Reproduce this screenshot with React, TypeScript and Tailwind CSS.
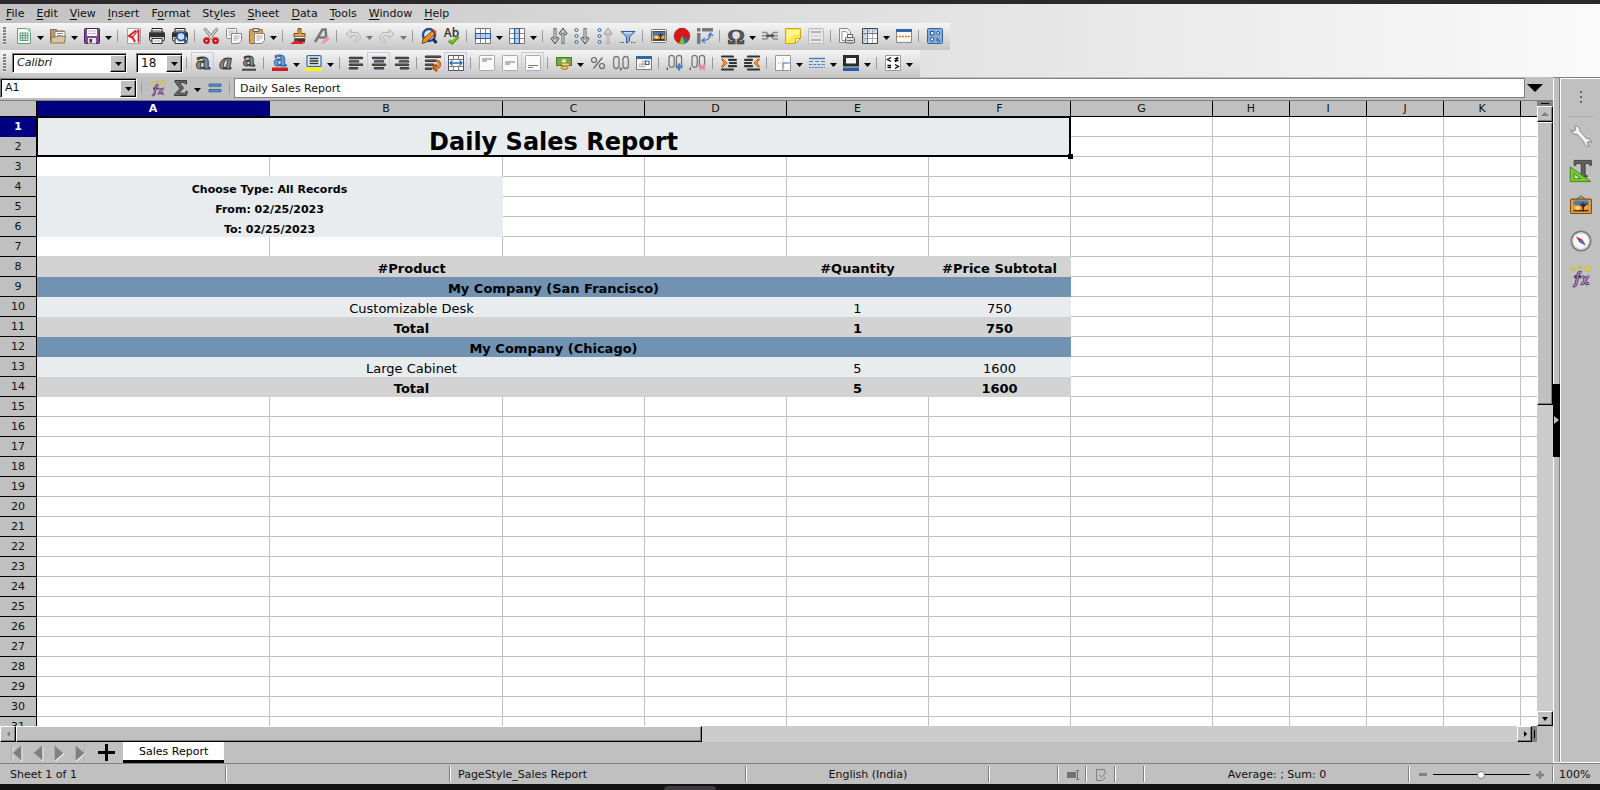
import type { ReactNode } from "react";

const BEVEL =
  "border border-t-white border-l-white border-r-black border-b-black bg-[#c0c0c0] shadow-[inset_-1px_-1px_0_#808080]";
const FIELD =
  "flex border border-t-[#808080] border-l-[#808080] border-r-white border-b-white bg-white shadow-[inset_1px_1px_0_#000]";

const MENUS = [
  ["", "F", "ile"],
  ["", "E", "dit"],
  ["", "V", "iew"],
  ["", "I", "nsert"],
  ["F", "o", "rmat"],
  ["St", "y", "les"],
  ["", "S", "heet"],
  ["", "D", "ata"],
  ["", "T", "ools"],
  ["", "W", "indow"],
  ["", "H", "elp"],
];

/* ---------- icons, all on a 16 unit grid ---------- */

function lines(rows: number[][]) {
  return rows.map(([x1, x2, y]) => (
    <g key={y} strokeLinecap="round">
      <path d={`M${x1} ${y}H${x2}`} stroke="#2e3132" strokeWidth="2.400" />
      <path d={`M${x1} ${y}H${x2}`} stroke="#777a78" strokeWidth=".6" />
    </g>
  ));
}

const fxGlyph = (
  <>
    <path
      d="M2.2 1.6l.5 1 1 .1-.8.7.2 1-.9-.5-.9.5.2-1-.8-.7 1-.1zM7 .2l.5 1 1 .1-.8.7.2 1L7 2.5l-.9.5.2-1-.8-.7 1-.1zM13 .2l.8 1.5 1.6.2-1.2 1.1.3 1.6-1.5-.8-1.5.8.3-1.6-1.2-1.1 1.6-.2z"
      fill="#f0cf28"
      stroke="#cda80d"
      strokeWidth=".4"
    />
    <path
      d="M2 15c2 .8 2.400-.8 2.800-2.800l1-5C6.100 5.600 7 4.800 8.500 5.400M3 8.500h5M8.500 9c1.500-.8 2 .4 2.500 2.200.5 2 1 3 3 2.200M14 8.800c-1.500-.5-2.300.7-3.200 2.500-.8 1.800-1.500 2.700-3 2.200"
      stroke="#5c3566"
      strokeWidth="2.200"
      fill="none"
    />
    <path
      d="M2 15c2 .8 2.400-.8 2.800-2.800l1-5C6.100 5.600 7 4.800 8.500 5.400M8.500 9c1.500-.8 2 .4 2.500 2.200.5 2 1 3 3 2.200M14 8.800c-1.500-.5-2.300.7-3.200 2.500-.8 1.800-1.500 2.700-3 2.200"
      stroke="#b48fbc"
      strokeWidth=".9"
      fill="none"
    />
  </>
);

const zeros = (
  <>
    <rect x="2" y=".3" width="5.200" height="12" rx="2.600" fill="none" stroke="#777" strokeWidth="1.300" />
    <rect x="9.400" y=".3" width="5.200" height="12" rx="2.600" fill="none" stroke="#777" strokeWidth="1.300" />
    <path d="M.3 12.500V15" stroke="#444" strokeWidth="1.200" />
  </>
);

function printer(extra?: ReactNode) {
  return (
    <>
      <path d="M3 .5h10v4H3z" fill="#f4f4f4" stroke="#222" />
      <path d="M4.500 2.500h7" stroke="#999" />
      <rect x=".5" y="4" width="15" height="9" rx="1.500" fill="#c9c9c4" stroke="#333" />
      <path d="M.5 4.500h15V9H.5z" fill="#2f3233" />
      <path d="M3 10.500h10v5H3z" fill="#fafafa" stroke="#333" />
      <path d="M5 13h6" stroke="#aaa" />
      {extra}
    </>
  );
}

function letterA(size: number, y: number, italic = false, color = "#8a8d8a", line = "#2e3132") {
  return (
    <text
      x="8"
      y={y}
      textAnchor="middle"
      fontSize={size}
      fontWeight="700"
      fontStyle={italic ? "italic" : "normal"}
      fontFamily="DejaVu Serif, serif"
      fill={color}
      stroke={line}
      strokeWidth=".9"
    >
      a
    </text>
  );
}

function valign(y: number) {
  return (
    <>
      <rect x=".5" y=".5" width="15" height="15" rx=".8" fill="#fafafa" stroke="#aaa" />
      <path d={`M3 ${y}h10M3 ${y + 2}h5`} stroke="#777" />
    </>
  );
}

function tableGrid(band: string) {
  return (
    <>
      <path d="M.5.500h15v15H.5z" fill="#fff" stroke="#777" />
      <path d={band} fill="#b7d0ee" />
      <path d="M.5 5.500h15M.5 10.500h15M5.500.5v15M10.500.5v15" stroke="#888" />
      <path d={band} fill="none" stroke="#2a5ca5" strokeWidth="1.200" />
    </>
  );
}

const picture = (
  <>
    <rect x="2.500" y="4" width="11" height="8" fill="#4e78ad" />
    <path d="M2.500 7.500h11V12h-11z" fill="#f3a33c" />
    <path d="M2.500 10.800h11V12h-11z" fill="#5a3a12" />
    <circle cx="5.500" cy="9.500" r="1.400" fill="#ffe37a" />
    <path d="M9.500 12V8.500M9.500 9L7.500 6.500M9.500 9L12 6M9.500 8V5.500" stroke="#2b2110" strokeWidth="1" />
  </>
);

const ICONS: Record<string, ReactNode> = {
  newDoc: (
    <>
      <path d="M1.500.5h9l4 4v11h-13z" fill="#f6faf8" stroke="#5f9c80" />
      <path d="M10 0h5v5" fill="#a9d3c0" />
      <path d="M4 5h8v7.500H4zM4 7.500h8M4 10h8M6.700 5v7.500M9.300 5v7.500" fill="none" stroke="#5f9c80" />
    </>
  ),
  folder: (
    <>
      <path d="M.5 14V1.500h6L7.500 3H14.500v11z" fill="#b39a77" stroke="#836a47" />
      <path d="M5 3.500h10v6H5z" fill="#fff" stroke="#888" />
      <path d="M7 5.500h6M7 7.500h4" stroke="#888" />
      <path d="M.5 15l1.500-6h5l1-1h7.500l-1 7z" fill="#d8c3a2" stroke="#937a55" />
    </>
  ),
  save: (
    <>
      <rect x=".5" y=".5" width="15" height="15" rx="1" fill="#7d4a92" stroke="#4b2260" />
      <path d="M3 1h10v7H3z" fill="#fafafa" />
      <path d="M4 3h8M4 5.500h8" stroke="#bbb" />
      <path d="M4 10h8v5.500H4z" fill="#e4e4e4" />
      <path d="M5.500 11H8v3.500H5.500z" fill="#4b2260" />
    </>
  ),
  pdf: (
    <>
      <path d="M1.500.5h13v15h-13z" fill="#f5f5f5" stroke="#a3a3a3" />
      <path d="M10 2.500L3 8l3.500 1.500L9 14" stroke="#d8212c" strokeWidth="2" fill="none" />
      <path d="M12.500 1.500v13" stroke="#d8212c" strokeWidth="1.800" />
      <path d="M6.500 9.500L12 2" stroke="#d8212c" strokeWidth="1.200" />
    </>
  ),
  print: printer(),
  preview: printer(
    <>
      <circle cx="9" cy="8.500" r="4" fill="#cfe1f5" stroke="#24569b" strokeWidth="1.600" />
      <path d="M12 11.500l3 3.500" stroke="#24569b" strokeWidth="2.400" />
    </>,
  ),
  cut: (
    <>
      <path d="M1.500.5l9 11M14.500.5l-9 11" stroke="#7c7f7d" strokeWidth="2.800" />
      <path d="M2 1l8 10M14 1L6 11" stroke="#ececec" strokeWidth="1.200" />
      <circle cx="3.500" cy="12.700" r="2.200" fill="none" stroke="#d01818" strokeWidth="2.400" />
      <circle cx="12.500" cy="12.700" r="2.200" fill="none" stroke="#d01818" strokeWidth="2.400" />
    </>
  ),
  copy: (
    <>
      <rect x=".5" y=".5" width="10" height="10" rx="1" fill="#fafafa" stroke="#888" />
      <path d="M2.500 3h6M2.500 5h6M2.500 7h3" stroke="#aaa" />
      <path d="M5.500 5.500h10v7l-3 3h-7z" fill="#fafafa" stroke="#888" />
      <path d="M7.500 8h6M7.500 10h6M7.500 12h4" stroke="#aaa" />
    </>
  ),
  paste: (
    <>
      <rect x=".5" y="1.500" width="13" height="14" rx="1" fill="#d9a44c" stroke="#8f6216" />
      <path d="M4 .5h6v3H4z" fill="#d5d5d5" stroke="#666" />
      <path d="M5.500 5.500h10v7l-3 3h-7z" fill="#fafafa" stroke="#888" />
      <path d="M7.500 8h6M7.500 10h6M7.500 12h3" stroke="#aaa" />
    </>
  ),
  brush: (
    <>
      <path d="M7 .5h3v5h4v3H3v-3h4z" fill="#e2a24b" stroke="#7d4d0e" />
      <path d="M3.500 8.500h10.500v2H3.500z" fill="#eee" stroke="#666" strokeWidth=".7" />
      <path d="M3.500 10.500h10.500v4H3z" fill="#453424" />
      <path d="M0 15l6-3 2 2 4-1v3H0z" fill="#e0232e" />
    </>
  ),
  clear: (
    <>
      <path d="M1 14L8.500 1.500h3l1 11M4.500 9.500H12" stroke="#777a78" strokeWidth="2.600" fill="none" />
      <path d="M7 15l6.500-7 2.500 2.500L9.500 16z" fill="#f19aa5" />
    </>
  ),
  undo: (
    <path d="M6 1.500L1 6l5 4.500V7.700h4.500c2.500 0 2.500 3.500-.5 4v2.500c7-.5 7-9.200.5-9.700H6z" fill="#ddd" stroke="#b4b4b4" />
  ),
  redo: (
    <path d="M10 1.500L15 6l-5 4.500V7.700H5.500c-2.500 0-2.500 3.500.5 4v2.500c-7-.5-7-9.200-.5-9.700H10z" fill="#ddd" stroke="#b4b4b4" />
  ),
  find: (
    <>
      <circle cx="8" cy="7" r="6" fill="#dce9f7" stroke="#234d8e" strokeWidth="2.400" />
      <path d="M12 11l3.500 4" stroke="#1d2d4a" strokeWidth="3" />
      <path d="M1 15.500l1-4.500 9-8 3 3-8.500 8z" fill="#f08c2a" stroke="#5a3008" strokeWidth=".8" />
      <path d="M11.500 2.500l1.500-1.300 2.700 2.700-1.500 1.500z" fill="#e33" />
    </>
  ),
  spell: (
    <>
      <text x="7.500" y="9" textAnchor="middle" fontSize="12" fontFamily="Open Sans, sans-serif" fontWeight="600" fill="#333">
        Ab
      </text>
      <path d="M5 12.500l3 2.500 6.500-6.500" stroke="#4e9a06" strokeWidth="3" fill="none" />
      <path d="M5.500 12.500L8 14.500l6-6" stroke="#a8e45c" strokeWidth="1" fill="none" />
    </>
  ),
  rows: tableGrid("M.5 5.500h15v5H.5z"),
  cols: tableGrid("M5.500.5h5v15h-5z"),
  sort: (
    <>
      <path d="M4 0v13M.5 9.500L4 14l3.500-4.500M12 16V3M8.500 6.500L12 2l3.500 4.500" stroke="#5f6361" strokeWidth="3" fill="none" />
      <path d="M4 .8v12.500M1 10l3 4 3-4M12 15.200V2.800M9 6l3-4 3 4" stroke="#f4f4f4" fill="none" />
    </>
  ),
  asc: (
    <>
      <path d="M11 0v13M7.500 9.500L11 14l3.500-4.500" stroke="#5f6361" strokeWidth="3" fill="none" />
      <path d="M11 .8v12.500M8 10l3 4 3-4" stroke="#f4f4f4" fill="none" />
      {[2, 8, 14].map((y) => (
        <circle key={y} cx="2.500" cy={y} r="1.500" fill="#dfeaf6" stroke="#3465a4" />
      ))}
    </>
  ),
  desc: (
    <>
      <path d="M11 16V3M7.500 6.500L11 2l3.500 4.500" stroke="#8f928f" strokeWidth="2.800" fill="none" />
      <path d="M11 15.200V2.800M8 6l3-4 3 4" stroke="#fff" fill="none" />
      {[2, 8, 14].map((y) => (
        <circle key={y} cx="2.500" cy={y} r="1.500" fill="#dfeaf6" stroke="#3465a4" />
      ))}
    </>
  ),
  filter: (
    <>
      <path d="M1 3.500h14L9.500 9v4l-3 2V9z" fill="#8fb4de" stroke="#2a5ca5" />
      <path d="M4 4.800h8" stroke="#e3eefa" />
      <path d="M0 14.500h5M11 14.500h5" stroke="#2a5ca5" strokeDasharray="1.500 1" />
    </>
  ),
  image: (
    <>
      <rect x=".5" y="1.500" width="15" height="13" rx="1" fill="#fff" stroke="#777" />
      <path d="M1.500 3h13v10h-13z" fill="#4a4a4a" />
      {picture}
    </>
  ),
  chart: (
    <>
      <circle cx="8" cy="8" r="7.900" fill="#d8151b" stroke="#930d10" strokeWidth=".5" />
      <path d="M8 8v7.900A7.900 7.900 0 0 0 15 11.700z" fill="#3465a4" />
      <path d="M8 8l3 7.300A7.900 7.900 0 0 1 5 15.300z" fill="#73c91e" />
    </>
  ),
  pivot: (
    <>
      <path d="M0 0h3.500v3.500H0zM5 0h11v3.500H5zM0 5h3.500v11H0z" fill="#777a78" />
      <path d="M5.500 12.500c5 0 8-2 8-7M11 8l2.500-3L16 8M8 10l-3 2.500L8 15" stroke="#4a86c6" strokeWidth="1.400" fill="none" />
    </>
  ),
  omega: (
    <text
      x="8"
      y="15.500"
      textAnchor="middle"
      fontSize="22"
      fontWeight="700"
      fontFamily="Liberation Serif, serif"
      fill="#555857"
      stroke="#333"
      strokeWidth=".6"
    >
      Ω
    </text>
  ),
  link: (
    <>
      <path d="M0 4.500h4.500l2 2.500M0 11h4.500l2-2.500M16 4.500h-4.500l-2 2.500M16 11h-4.500l-2-2.500M0 7.700h5M11 7.700h5" stroke="#888b89" strokeWidth="1.600" fill="none" />
      <path d="M4 7.700h8" stroke="#444" strokeWidth="2" />
    </>
  ),
  note: (
    <>
      <path d="M.5.500h15v10l-5 5H.5z" fill="#fbe94f" stroke="#c9a90c" />
      <path d="M15.500 10.500h-5v5z" fill="#fff" stroke="#c9a90c" />
      <path d="M2 2h12v4C8 6 5 9 2 13z" fill="#fdf59a" />
    </>
  ),
  header: (
    <>
      <rect x=".5" y=".5" width="15" height="15" rx="1" fill="#e6e6e6" stroke="#bbb" />
      <path d="M3 4h10M3 12h10" stroke="#b4b4b4" strokeWidth="2" />
      <path d="M3 8h10" stroke="#d0d0d0" />
    </>
  ),
  printArea: (
    <>
      <path d="M.5.500h8l3 3v11H.5z" fill="#f5f5f5" stroke="#888" />
      <path d="M3 3.500h4l2 2v7H3z" fill="#fff" stroke="#999" />
      <rect x="6.500" y="9.500" width="9" height="5.500" rx="1" fill="#ddd" stroke="#555" />
      <path d="M8.500 6.500h5v3h-5z" fill="#fff" stroke="#666" />
      <path d="M8 12.500h6" stroke="#666" />
    </>
  ),
  freeze: (
    <>
      <path d="M.5.500h15v15H.5z" fill="#fff" stroke="#444" />
      <path d="M1 1h14v4H1zM1 1h4v14H1z" fill="#d5e3f3" />
      <path d="M1 4l3-3M6 4l3-3M11 4l3-3M1 9l3-3M1 14l3-3" stroke="#7fa6d2" strokeWidth=".8" />
      <path d="M1 10.500h14M10.500 1v14" stroke="#aaa" />
      <path d="M1 5.500h14M5.500 1v14" stroke="#777" />
    </>
  ),
  split: (
    <>
      <path d="M.5 1.500h15v13H.5z" fill="#f8f8f8" stroke="#888" />
      <path d="M0 1h16v3H0z" fill="#3465a4" />
      <path d="M0 8.500h16" stroke="#f57900" strokeDasharray="2 1" strokeWidth="1.400" />
    </>
  ),
  draw: (
    <>
      <rect x=".5" y=".5" width="15" height="15" rx="1" fill="#86abd9" stroke="#3465a4" />
      <path d="M3.500 3.500h3.500v3.500H3.500zM10 10l3 3h-3zM11 3l2 2-2 2-1.500-2z" fill="#dbe8f7" stroke="#204a87" strokeWidth=".9" />
      <circle cx="5" cy="11.300" r="1.800" fill="#dbe8f7" stroke="#204a87" strokeWidth=".9" />
    </>
  ),
  bold: letterA(23, 14),
  italic: letterA(21, 14, true),
  underline: (
    <>
      {letterA(19, 11)}
      <path d="M1 14.700h14" stroke="#444" strokeWidth="2" />
    </>
  ),
  fontColor: (
    <>
      {letterA(20, 11, false, "#6ea2dc", "#2a5ca5")}
      <path d="M0 12.500h16v3.500H0z" fill="#d01c1c" />
    </>
  ),
  highlight: (
    <>
      <rect x="1" y=".6" width="14" height="10.800" rx="1" fill="#f0f4fa" stroke="#3465a4" strokeWidth="1.200" />
      <path d="M3.500 3.500h9M3.500 6h9M3.500 8.500h9" stroke="#333" strokeWidth="1.400" />
      <path d="M0 12.500h16v3.500H0z" fill="#fff200" />
    </>
  ),
  left: lines([[2, 14, 3], [2, 10, 6.400], [2, 14, 9.800], [2, 9, 13.200]]),
  center: lines([[2, 14, 3], [4, 12, 6.400], [2, 14, 9.800], [4, 12, 13.200]]),
  right: lines([[2, 14, 3], [6, 14, 6.400], [2, 14, 9.800], [7, 14, 13.200]]),
  wrap: (
    <>
      {lines([[1, 15, 1.800], [1, 11, 5.800], [1, 8, 9.800], [1, 6, 13.800]])}
      <path d="M11 6c5 0 5.500 7 0 7H9.500M12 9.500L8.500 13l3.500 3" stroke="#b3540a" strokeWidth="2.600" fill="none" />
      <path d="M11 6c5 0 5.500 7 0 7H9.500" stroke="#f5a34a" fill="none" />
    </>
  ),
  merge: (
    <>
      <path d="M.5.500h15v15H.5z" fill="#fff" stroke="#555" />
      <path d="M.5 4.500h15M.5 11.500h15M5.500.5v4M10.500.5v4M5.500 11.500v4M10.500 11.500v4" stroke="#777" />
      <path d="M2 8h12M4.500 5.500L2 8l2.500 2.500M11.500 5.500L14 8l-2.500 2.500" stroke="#2a6ab8" strokeWidth="1.300" fill="none" />
    </>
  ),
  vtop: valign(4),
  vmid: valign(7),
  vbot: valign(10.500),
  currency: (
    <>
      <rect x=".5" y="2.500" width="15" height="8" fill="#73a845" stroke="#4a7a20" />
      <circle cx="8" cy="6.500" r="2.400" fill="#d4efb0" />
      <ellipse cx="9.500" cy="9.500" rx="4" ry="1.700" fill="#f0d890" stroke="#a07818" />
      <ellipse cx="8.500" cy="12.700" rx="3.500" ry="1.700" fill="#e8c560" stroke="#a07818" />
    </>
  ),
  percent: (
    <>
      <circle cx="4" cy="5" r="2.500" fill="none" stroke="#666" strokeWidth="1.200" />
      <circle cx="12" cy="11" r="2.500" fill="none" stroke="#666" strokeWidth="1.200" />
      <path d="M12.500 2.500l-9 11" stroke="#666" strokeWidth="1.200" />
    </>
  ),
  number: (
    <>
      <rect x=".6" y="1.500" width="5.400" height="12" rx="2.700" fill="none" stroke="#777" strokeWidth="1.300" />
      <rect x="10" y="1.500" width="5.400" height="12" rx="2.700" fill="none" stroke="#777" strokeWidth="1.300" />
      <path d="M8.300 12.500l-.8 3" stroke="#444" strokeWidth="1.200" />
    </>
  ),
  date: (
    <>
      <path d="M.5 1.500h15v13H.5z" fill="#fafafa" stroke="#777" />
      <path d="M0 1h16v3H0z" fill="#3465a4" />
      <path d="M3 9h3v3H3zM6 9h3v3H6zM6 6h3v3H6z" fill="#eee" stroke="#aaa" strokeWidth=".8" />
      <path d="M9.500 6h3.500v3.500H9.500z" fill="#fff" stroke="#3465a4" strokeWidth="1.200" />
    </>
  ),
  addDec: (
    <>
      {zeros}
      <path d="M12 8.500v7M8.500 12h7" stroke="#4a80c0" strokeWidth="2.400" />
    </>
  ),
  delDec: (
    <>
      {zeros}
      <path d="M9.500 9.500l5.500 5.500M15 9.500L9.500 15" stroke="#ef8a98" strokeWidth="2.200" />
    </>
  ),
  indent: (
    <>
      <path d="M1 1.500h11M8 4.800h7M9 8h6M8 11.200h7M1 14.500h11" stroke="#333" strokeWidth="2.200" strokeLinecap="round" />
      <path d="M.5 4h1.500L6 8l-4 4H.5L3 8z" fill="#f5a34a" stroke="#ce5c00" />
    </>
  ),
  outdent: (
    <>
      <path d="M4 1.500h11M1 4.800h7M1 8h6M1 11.200h7M4 14.500h11" stroke="#333" strokeWidth="2.200" strokeLinecap="round" />
      <path d="M15.500 4H14l-4 4 4 4h1.500L13 8z" fill="#f5a34a" stroke="#ce5c00" />
    </>
  ),
  borders: (
    <>
      <path d="M.5.500h15v15H.5z" fill="#fafafa" stroke="#999" />
      <path d="M8 3v10M3 8h10" stroke="#aaa" strokeDasharray="1 1" />
      <path d="M8 15.500V8h7.500" fill="none" stroke="#4a80c0" />
    </>
  ),
  lineStyle: (
    <>
      <path d="M0 3.500h16" stroke="#4a80c0" strokeWidth="1.500" />
      <path d="M0 6.500h16" stroke="#4a80c0" strokeDasharray="4 2" />
      <path d="M0 9.500h16" stroke="#4a80c0" strokeDasharray="3 1.300" />
      <path d="M0 12.500h16" stroke="#4a80c0" strokeDasharray="2 1" />
    </>
  ),
  borderColor: (
    <>
      <path d="M1.500 1.500h13v8.500h-13z" fill="#f4f4f4" stroke="#2b2b2b" strokeWidth="3" />
      <path d="M0 12.500h16v3.500H0z" fill="#2a5ca5" />
    </>
  ),
  conditional: (
    <>
      <path d="M.5.500h15v15H.5z" fill="#fff" stroke="#999" />
      <path
        d="M6 2.500l-3.500 2L6 6.500M10 9.500l3.500 2L10 13.500M2.500 10.500H6M2.500 12.500H6M9.500 3.700h4M9.500 5.700h4M12.500 2l-2 5"
        stroke="#000"
        strokeWidth="1.300"
        fill="none"
      />
    </>
  ),
  fx: fxGlyph,
  sum: (
    <path
      d="M2 .5h11.500v3.500h-1.200C12 2.800 11.500 2.600 10 2.600H6.500L10.500 8l-5 5.200H11c1.500 0 1.800-.5 2.200-2h1.100l-.8 4.300h-12v-1.300L7 8.700 2 2z"
      fill="#666967"
      stroke="#333"
      strokeWidth=".9"
    />
  ),
  equals: <path d="M2 4h12v2.300H2zM2 9.500h12v2.300H2z" fill="#5b93d3" stroke="#204a87" strokeWidth=".7" />,
  wrench: (
    <path
      d="M3.500.8C5.500.5 7.500 2 7.200 4.300L12 9.800c2-.3 3.600 1 3.700 3l-1.500-1-1.500.8.200 1.700 1.300.9c-2 .8-4-.5-4-2.700L5.200 6.700C3 7.100 1 5.700.6 3.500l1.600 1.200 1.700-.9L3.800 2z"
      fill="#f0f0ee"
      stroke="#7f827f"
      strokeWidth=".7"
    />
  ),
  styles: (
    <>
      <path
        d="M3 .3h12.500v3.600h-1.200C14 2.700 13.500 2.500 12 2.500h-1V10c0 1 .3 1.200 1.500 1.300v1H6.700v-1c1.200-.1 1.500-.3 1.500-1.300V2.500H6.500C5 2.500 4.500 2.700 4.200 3.900H3z"
        fill="#5f6365"
        stroke="#333"
        strokeWidth=".6"
      />
      <path d="M.2 5l15 10.700H.2z" fill="#7bc43b" stroke="#3c8a0b" strokeWidth=".7" />
      <path d="M3 10l4.800 3.600H3z" fill="#d3f0b5" stroke="#3c8a0b" strokeWidth=".7" />
    </>
  ),
  gallery: (
    <>
      <path d="M5 3L8 .8 11 3" stroke="#777" fill="none" />
      <rect x=".4" y="3" width="15.200" height="10.500" rx=".8" fill="#e6a33a" stroke="#7d4d0e" strokeWidth=".8" />
      {picture}
    </>
  ),
  compass: (
    <>
      <circle cx="8" cy="8" r="7" fill="#fafafa" stroke="#777a78" strokeWidth="1.300" />
      <circle cx="8" cy="8" r="5.900" fill="none" stroke="#ccc" strokeWidth=".7" />
      <path d="M4.300 4.500l4.900 2.500L7 9z" fill="#d8212c" />
      <path d="M11.700 11.500L9.200 7 7 9z" fill="#3a6db5" />
    </>
  ),
};

function Icon({ name, className = "size-4" }: { name: string; className?: string }) {
  return (
    <svg viewBox="0 0 16 16" fill="none" aria-hidden="true" className={`${className} shrink-0 overflow-visible`}>
      {ICONS[name]}
    </svg>
  );
}

/* ---------- toolbars: "|" is a separator, "v" a drop-down arrow, "*" marks a pressed button ---------- */

const STANDARD =
  "newDoc v folder v save v | pdf print preview | cut copy paste v | brush clear | undo v- redo v- | find spell | rows v cols v | sort asc desc filter | image chart pivot | omega v link note header | printArea freeze v split | draw";
const FORMATTING =
  "| bold* italic underline | fontColor v highlight v | left center* right | wrap merge* | vtop vmid vbot* | currency v percent number date | addDec delDec | indent outdent | borders v lineStyle v borderColor v | conditional v";

function Triangle({ className = "text-black" }: { className?: string }) {
  return (
    <svg viewBox="0 0 7 4" className={`h-1 w-[7px] shrink-0 ${className}`} aria-hidden="true">
      <path d="M0 0h7L3.500 4z" fill="currentColor" />
    </svg>
  );
}

function Tools({ items }: { items: string }) {
  return (
    <>
      {items.split(" ").map((item, i) => {
        if (item === "|") {
          return <span key={i} className="ml-[3px] mr-1 h-3 w-px shrink-0 bg-[#9a9a9a]" />;
        }
        if (item === "v" || item === "v-") {
          return (
            <button key={i} aria-label="More options" className="flex h-6 w-[11px] shrink-0 items-center justify-center pt-1">
              <Triangle className={item === "v-" ? "text-[#777]" : "text-black"} />
            </button>
          );
        }
        const name = item.replace("*", "");
        return (
          <button
            key={i}
            aria-label={name}
            className={`flex h-[22px] w-[23px] shrink-0 items-center justify-center border ${
              item.endsWith("*") ? "border-[#c9c9e4]" : "border-transparent"
            }`}
          >
            <Icon name={name} />
          </button>
        );
      })}
    </>
  );
}

function Grip() {
  return <span className="mx-[3px] h-[18px] w-[3px] shrink-0 bg-[repeating-linear-gradient(#808080_0_2px,#e4e4e4_2px_3px)]" />;
}

function Combo({ label, value, className }: { label: string; value: string; className: string }) {
  return (
    <div className={`${FIELD} h-5 shrink-0 ${className}`}>
      <input aria-label={label} defaultValue={value} className="min-w-0 flex-1 bg-transparent pl-1 outline-none" />
      <button aria-label={`${label} list`} className={`${BEVEL} mt-px flex w-4 items-center justify-center`}>
        <Triangle />
      </button>
    </div>
  );
}

/* ---------- sheet ---------- */

const COLUMNS = [
  ["A", 233],
  ["B", 233],
  ["C", 142],
  ["D", 142],
  ["E", 142],
  ["F", 142],
  ["G", 142],
  ["H", 77],
  ["I", 77],
  ["J", 77],
  ["K", 77],
  ["", 77],
] as const;

type Cell = { text?: string; span?: number; rows?: number; look: string };

const INFO = "bg-[#e8ecef] border-transparent text-[11px] leading-[13px] font-bold";
const LIGHT = "bg-[#e8ecef] border-transparent text-[13px] leading-[15px]";
const GREY = "bg-[#d3d3d3] border-transparent text-[13px] leading-[15px] font-bold";
const BLUE = "bg-[#7192b1] border-transparent text-[13px] leading-[15px] font-bold";

function line(look: string, product: string, quantity: string, price: string): Cell[] {
  return [
    { text: product, span: 4, look },
    { text: quantity, look },
    { text: price, look },
  ];
}

const CELLS: Record<number, Cell[]> = {
  1: [{ text: "Daily Sales Report", span: 6, rows: 2, look: "bg-[#e8ecef] border-transparent text-[24px] leading-[28px] font-bold" }],
  3: Array.from({ length: 2 }, () => ({ look: "border-r-[#c0c0c0] border-b-[#e8ecef]" })),
  4: [{ text: "Choose Type: All Records", span: 2, look: INFO }],
  5: [{ text: "From: 02/25/2023", span: 2, look: INFO }],
  6: [{ text: "To: 02/25/2023", span: 2, look: INFO }],
  7: Array.from({ length: 6 }, () => ({ look: "border-r-[#c0c0c0] border-b-[#d3d3d3]" })),
  8: line(GREY, "#Product", "#Quantity", "#Price Subtotal"),
  9: [{ text: "My Company (San Francisco)", span: 6, look: BLUE }],
  10: line(LIGHT, "Customizable Desk", "1", "750"),
  11: line(GREY, "Total", "1", "750"),
  12: [{ text: "My Company (Chicago)", span: 6, look: BLUE }],
  13: line(LIGHT, "Large Cabinet", "5", "1600"),
  14: line(GREY, "Total", "5", "1600"),
};

function Row({ n }: { n: number }) {
  const cells = CELLS[n] ?? [];
  const used = n === 2 ? 6 : cells.reduce((sum, c) => sum + (c.span ?? 1), 0);
  return (
    <tr className="h-5">
      <th
        scope="row"
        className={`h-5 border-r border-b border-r-black p-0 align-middle leading-4 ${
          n === 1 ? "border-b-[#000080] bg-[#000080] font-bold text-white" : "border-b-black bg-[#c0c0c0] font-normal"
        }`}
      >
        {n}
      </th>
      {cells.map((c, i) => (
        <td
          key={i}
          colSpan={c.span}
          rowSpan={c.rows}
          className={`border-r border-b p-0 text-center align-bottom whitespace-nowrap text-black ${c.look}`}
        >
          {c.text}
        </td>
      ))}
      {COLUMNS.slice(used).map(([name]) => (
        <td key={name} className="border-r border-b border-[#c0c0c0] p-0" />
      ))}
    </tr>
  );
}

function Sheet() {
  return (
    <div className="relative min-w-0 flex-1 overflow-hidden bg-white">
      <table className="w-[1598px] table-fixed border-separate border-spacing-0">
        <colgroup>
          <col className="w-[37px]" />
          {COLUMNS.map(([name, width]) => (
            <col key={name} style={{ width }} />
          ))}
        </colgroup>
        <thead>
          <tr className="h-4">
            <th className="border-r border-b border-black bg-[#c0c0c0] p-0" />
            {COLUMNS.map(([name]) => (
              <th
                key={name}
                scope="col"
                className={`h-4 border-r border-b border-b-black p-0 align-middle leading-[14px] ${
                  name === "A" ? "border-r-[#000080] bg-[#000080] font-bold text-white" : "border-r-black bg-[#c0c0c0] font-normal"
                }`}
              >
                {name}
              </th>
            ))}
          </tr>
        </thead>
        <tbody>
          {Array.from({ length: 31 }, (_, i) => (
            <Row key={i} n={i + 1} />
          ))}
        </tbody>
      </table>
      {/* cell cursor with its fill handle */}
      <div className="pointer-events-none absolute top-[15px] left-9 h-[41px] w-[1035px] border-2 border-black">
        <span className="absolute -right-1 -bottom-1 size-[5px] bg-black" />
      </div>
    </div>
  );
}

function ScrollArrow({ label, d, dim, className }: { label: string; d: string; dim?: boolean; className: string }) {
  return (
    <button aria-label={label} className={`${BEVEL} flex shrink-0 items-center justify-center ${className}`}>
      <svg viewBox="0 0 8 8" className={`size-2 ${dim ? "text-[#808080]" : "text-black"}`} aria-hidden="true">
        <path d={d} fill="currentColor" />
      </svg>
    </button>
  );
}

const TAB_ARROWS = [
  ["First sheet", "M1 0v16M10 1v14L2 8z"],
  ["Previous sheet", "M10 1v14L2 8z"],
  ["Next sheet", "M2 1v14l8-7z"],
  ["Last sheet", "M11 0v16M2 1v14l8-7z"],
];

function SheetTabs() {
  return (
    <div className="flex h-[21px] shrink-0 items-center bg-[#c0c0c0] pl-[11px]">
      {TAB_ARROWS.map(([label, d]) => (
        <button key={label} aria-label={label} className="w-[21px]">
          <svg viewBox="0 0 12 16" className="h-4 w-3" aria-hidden="true">
            <path d={d} fill="none" stroke="#fff" transform="translate(.8 .8)" />
            <path d={d} fill="#808080" stroke="#808080" strokeWidth=".6" />
          </svg>
        </button>
      ))}
      <button aria-label="Add sheet" className="ml-[3px]">
        <svg viewBox="0 0 17 17" className="size-[17px]" aria-hidden="true">
          <path d="M8.500 0v17M0 8.500h17" stroke="#000" strokeWidth="3" />
        </svg>
      </button>
      <button className="ml-2 h-[21px] border-b-[3px] border-black bg-white px-4 pt-0.5 text-black">Sales Report</button>
    </div>
  );
}

function Sidebar() {
  return (
    <aside className="flex w-[47px] shrink-0 border-y border-t-[#808080] border-b-white bg-[#c0c0c0]">
      <div className="flex w-[7px] items-center border-x border-l-white border-r-[#808080]">
        <button aria-label="Hide sidebar" className="-mx-px flex h-[73px] w-[7px] shrink-0 items-center bg-black">
          <svg viewBox="0 0 6 8" className="ml-px h-2 w-1.5" aria-hidden="true">
            <path d="M0 0l5 4-5 4z" fill="#c0c0c0" />
          </svg>
        </button>
      </div>
      <div className="flex flex-1 flex-col items-center border-t border-l border-white">
        <button aria-label="Sidebar settings" className="mt-2.5 flex h-4 w-6 flex-col items-center justify-center gap-[3px]">
          <span className="size-0.5 bg-[#666]" />
          <span className="size-0.5 bg-[#666]" />
          <span className="size-0.5 bg-[#666]" />
        </button>
        <hr className="mt-[11px] mb-px w-6 border-t border-[#aaa]" />
        {["wrench", "styles", "gallery", "compass", "fx"].map((name) => (
          <button key={name} aria-label={name} className="flex h-[35px] w-8 items-center justify-center">
            <Icon name={name} className="size-[22px]" />
          </button>
        ))}
      </div>
    </aside>
  );
}

function Status({ className, children }: { className: string; children?: ReactNode }) {
  return (
    <div className={`flex h-4 shrink-0 items-center border-r border-white pt-px shadow-[inset_-1px_0_0_#808080] ${className}`}>
      {children}
    </div>
  );
}

function StatusBar() {
  return (
    <footer className="flex h-[21px] shrink-0 items-center border-t border-[#808080] bg-[#c0c0c0]">
      <Status className="w-[227px] pl-2.5">Sheet 1 of 1</Status>
      <Status className="w-56" />
      <Status className="w-[296px] pl-[7px]">PageStyle_Sales Report</Status>
      <Status className="w-[243px] justify-center">English (India)</Status>
      <Status className="w-[69px]" />
      <Status className="w-7 justify-center">
        <svg viewBox="0 0 12 10" className="h-2.5 w-3" aria-hidden="true">
          <path d="M0 2h9v6H0z" fill="#707070" />
          <path d="M9 .5h3M9 9.500h3M10.500.5v9" stroke="#707070" />
        </svg>
      </Status>
      <Status className="w-[29px] justify-center">
        <svg viewBox="0 0 12 12" className="size-3" aria-hidden="true">
          <path d="M9.500 3V.5h-8v11h6l2-2V8M4 6l2.500 2.500L11.500 3" fill="none" stroke="#808080" />
        </svg>
      </Status>
      <Status className="w-[29px]" />
      <Status className="min-w-0 flex-1 justify-center">Average: ; Sum: 0</Status>
      <Status className="w-[144px] gap-1 pl-[7px]">
        <button aria-label="Zoom out" className="flex h-4 w-3 items-center justify-center">
          <span className="h-[3px] w-2 bg-[#808080]" />
        </button>
        <input
          type="range"
          aria-label="Zoom"
          min="0"
          max="100"
          defaultValue="49"
          className="h-2 w-[97px] appearance-none bg-[linear-gradient(#000,#000)] bg-[length:100%_1px] bg-center bg-no-repeat [&::-webkit-slider-thumb]:size-2 [&::-webkit-slider-thumb]:appearance-none [&::-webkit-slider-thumb]:rounded-full [&::-webkit-slider-thumb]:border [&::-webkit-slider-thumb]:border-[#808080] [&::-webkit-slider-thumb]:bg-white"
        />
        <button aria-label="Zoom in" className="flex h-4 w-3 items-center justify-center">
          <svg viewBox="0 0 8 8" className="size-2" aria-hidden="true">
            <path d="M4 0v8M0 4h8" stroke="#808080" strokeWidth="2.400" />
          </svg>
        </button>
      </Status>
      <span className="w-[46px] shrink-0 pt-px pl-[5px]">100%</span>
    </footer>
  );
}

export default function App() {
  return (
    <div className="flex h-screen flex-col overflow-hidden bg-[#c0c0c0] font-['DejaVu_Sans',sans-serif] text-[11px] leading-4 text-[#111]">
      <div className="h-1 shrink-0 bg-[#2b292b]" />
      <header className="shrink-0 bg-linear-to-r from-[#c2c2c2] to-[#fafafa]">
        <nav className="flex h-[19px] items-center">
          {MENUS.map(([before, key, after]) => (
            <button key={before + key + after} className="px-1.5">
              {before}
              <u className="underline-offset-2">{key}</u>
              {after}
            </button>
          ))}
        </nav>
        <div className="flex h-[27px] w-fit items-center bg-linear-to-b from-[#f5f5f5] to-[#c6c6c6] pr-1 pb-px">
          <Grip />
          <span className="w-[3px]" />
          <Tools items={STANDARD} />
        </div>
        <div className="flex h-[27px] w-fit items-center bg-linear-to-b from-[#f5f5f5] to-[#c6c6c6] pr-[5px] pb-px">
          <Grip />
          <Combo label="Font name" value="Calibri" className="ml-[3px] w-[115px] italic" />
          <Combo label="Font size" value="18" className="ml-[9px] w-[47px] text-[12px]" />
          <Tools items={FORMATTING} />
        </div>
      </header>

      <div className="flex min-h-0 flex-1">
        <main className="flex min-w-0 flex-1 flex-col">
          <div className="flex h-6 shrink-0 items-center border-b border-[#808080] pb-px">
            <Combo label="Name box" value="A1" className="w-[137px]" />
            <span className="mx-1 h-3 w-px shrink-0 bg-[#9a9a9a]" />
            <Tools items="fx sum v equals" />
            <span className="mr-1 ml-[3px] h-3 w-px bg-[#9a9a9a]" />
            <input
              aria-label="Formula"
              defaultValue="Daily Sales Report"
              className="h-5 min-w-0 flex-1 border border-[#808080] bg-white px-[5px] outline-none"
            />
            <button aria-label="Expand formula bar" className="mr-2 flex w-5 justify-center">
              <svg viewBox="0 0 16 8" className="h-2 w-4" aria-hidden="true">
                <path d="M0 0h16L8 8z" fill="#000" />
              </svg>
            </button>
          </div>

          <div className="flex min-h-0 flex-1">
            <Sheet />
            <div className="flex w-4 shrink-0 flex-col bg-[#ccc]">
              <div className="flex h-[5px] shrink-0 items-center justify-center bg-[#808080]">
                <span className="h-px w-2 bg-black" />
              </div>
              <ScrollArrow label="Scroll up" d="M0 6h8L4 2z" dim className="h-4" />
              <div className="min-h-0 flex-1">
                <div className={`${BEVEL} h-[48%]`} />
              </div>
              <ScrollArrow label="Scroll down" d="M1 2h6L4 6z" className="h-[15px]" />
            </div>
          </div>

          <div className="flex h-4 shrink-0 pr-4">
            <div className="flex min-w-0 flex-1 bg-[#ccc]">
              <ScrollArrow label="Scroll left" d="M6 1v6L3 4z" dim className="w-4" />
              <div className="min-w-0 flex-1">
                <div className={`${BEVEL} h-4 w-[45.7%]`} />
              </div>
              <ScrollArrow label="Scroll right" d="M3 1v6l3-3z" className="w-[15px]" />
              <div className="flex w-[5px] shrink-0 items-center justify-center bg-[#808080]">
                <span className="h-2 w-px bg-black" />
              </div>
            </div>
          </div>

          <SheetTabs />
        </main>
        <Sidebar />
      </div>

      <StatusBar />
      <div className="flex h-1.5 shrink-0 bg-[#131213]">
        <span className="mt-0.5 ml-[41.5%] w-[52px] rounded-t bg-[#3d3b3d]" />
      </div>
    </div>
  );
}
